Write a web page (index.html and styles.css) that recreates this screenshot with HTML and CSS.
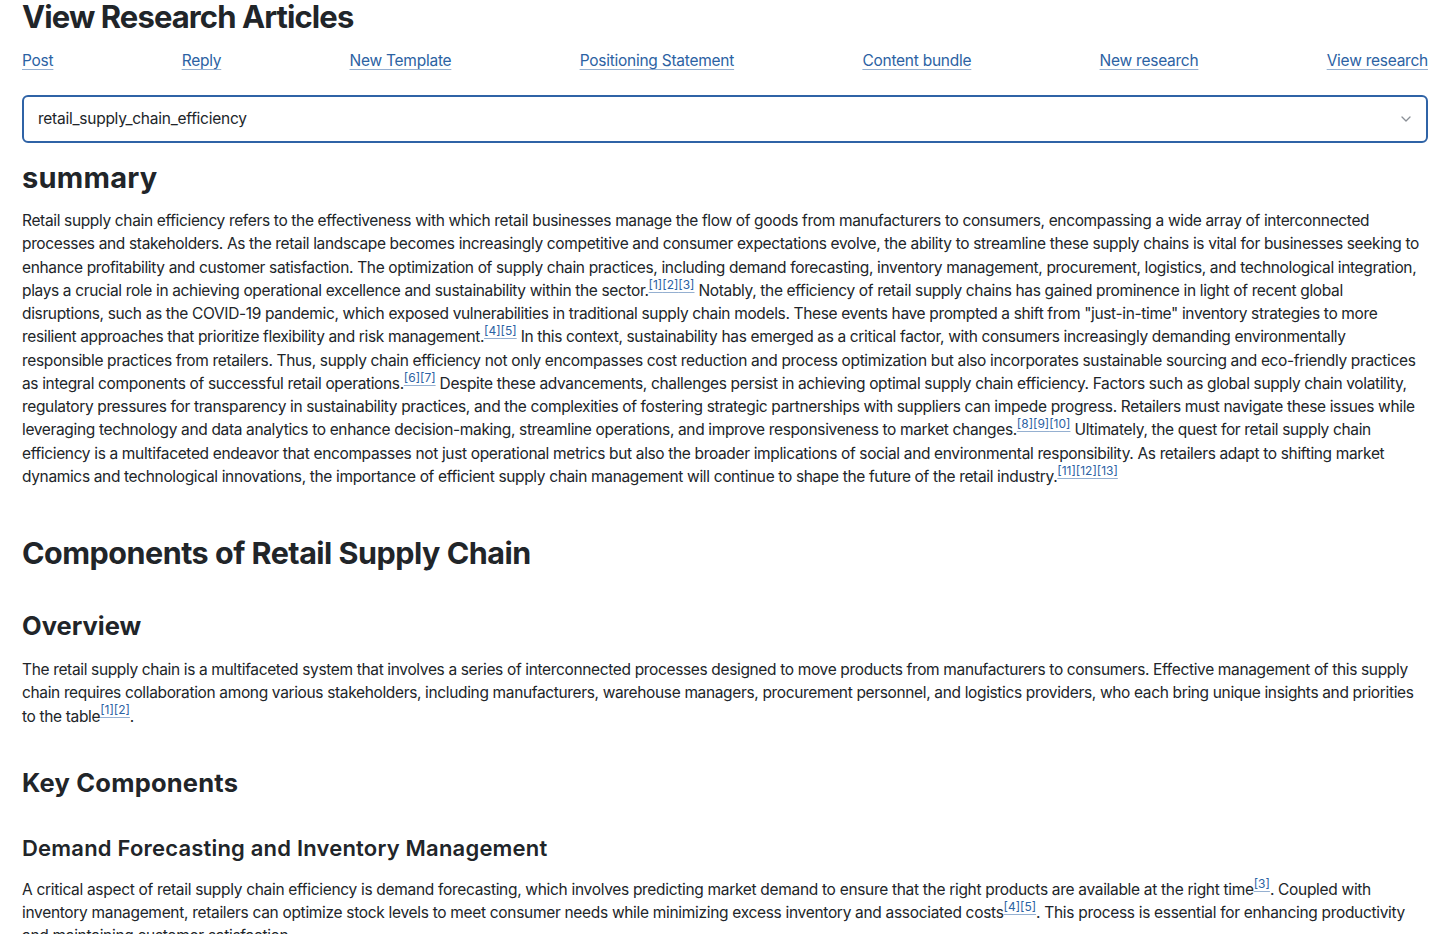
FILE: index.html
```html
<!DOCTYPE html>
<html lang="en">
<head>
<meta charset="utf-8">
<title>View Research Articles</title>
<link rel="stylesheet" href="styles.css">
</head>
<body>
<main class="page">
  <h1 class="page-title">View Research Articles</h1>
  <nav class="nav-links">
    <a href="#">Post</a>
    <a href="#">Reply</a>
    <a href="#">New Template</a>
    <a href="#">Positioning Statement</a>
    <a href="#">Content bundle</a>
    <a href="#">New research</a>
    <a href="#">View research</a>
  </nav>
  <div class="select-box">
    <span class="select-value">retail_supply_chain_efficiency</span>
    <svg class="chevron" width="12" height="8" viewBox="0 0 12 8"><path d="M2 2l4 4 4-4" fill="none" stroke="#8a8f96" stroke-width="1.3" stroke-linecap="round" stroke-linejoin="round"/></svg>
  </div>

  <article class="article">
    <h2 class="summary-title">summary</h2>
    <p>Retail supply chain efficiency refers to the effectiveness with which retail businesses manage the flow of goods from manufacturers to consumers, encompassing a wide array of interconnected processes and stakeholders. As the retail landscape becomes increasingly competitive and consumer expectations evolve, the ability to streamline these supply chains is vital for businesses seeking to enhance profitability and customer satisfaction. The optimization of supply chain practices, including demand forecasting, inventory management, procurement, logistics, and technological integration, plays a crucial role in achieving operational excellence and sustainability within the sector.<sup><a href="#">[1]</a><a href="#">[2]</a><a href="#">[3]</a></sup> Notably, the efficiency of retail supply chains has gained prominence in light of recent global disruptions, such as the COVID-19 pandemic, which exposed vulnerabilities in traditional supply chain models. These events have prompted a shift from "just-in-time" inventory strategies to more resilient approaches that prioritize flexibility and risk management.<sup><a href="#">[4]</a><a href="#">[5]</a></sup> In this context, sustainability has emerged as a critical factor, with consumers increasingly demanding environmentally responsible practices from retailers. Thus, supply chain efficiency not only encompasses cost reduction and process optimization but also incorporates sustainable sourcing and eco-friendly practices as integral components of successful retail operations.<sup><a href="#">[6]</a><a href="#">[7]</a></sup> Despite these advancements, challenges persist in achieving optimal supply chain efficiency. Factors such as global supply chain volatility, regulatory pressures for transparency in sustainability practices, and the complexities of fostering strategic partnerships with suppliers can impede progress. Retailers must navigate these issues while leveraging technology and data analytics to enhance decision-making, streamline operations, and improve responsiveness to market changes.<sup><a href="#">[8]</a><a href="#">[9]</a><a href="#">[10]</a></sup> Ultimately, the quest for retail supply chain efficiency is a multifaceted endeavor that encompasses not just operational metrics but also the broader implications of social and environmental responsibility. As retailers adapt to shifting market dynamics and technological innovations, the importance of efficient supply chain management will continue to shape the future of the retail industry.<sup><a href="#">[11]</a><a href="#">[12]</a><a href="#">[13]</a></sup></p>

    <h2 class="section-title">Components of Retail Supply Chain</h2>
    <h3 class="sub-title overview-title">Overview</h3>
    <p>The retail supply chain is a multifaceted system that involves a series of interconnected processes designed to move products from manufacturers to consumers. Effective management of this supply chain requires collaboration among various stakeholders, including manufacturers, warehouse managers, procurement personnel, and logistics providers, who each bring unique insights and priorities to the table<sup><a href="#">[1]</a><a href="#">[2]</a></sup>.</p>

    <h3 class="sub-title key-title">Key Components</h3>
    <h4 class="minor-title">Demand Forecasting and Inventory Management</h4>
    <p class="wide-para">A critical aspect of retail supply chain efficiency is demand forecasting, which involves predicting market demand to ensure that the right products are available at the right time<sup><a href="#">[3]</a></sup>. Coupled with inventory management, retailers can optimize stock levels to meet consumer needs while minimizing excess inventory and associated costs<sup><a href="#">[4]</a><a href="#">[5]</a></sup>. This process is essential for enhancing productivity and maintaining customer satisfaction.</p>
  </article>
</main>
</body>
</html>
```

FILE: styles.css
```css
html, body {
  margin: 0;
  padding: 0;
  background: #ffffff;
}

body {
  font-family: Inter, "Noto Sans", "Liberation Sans", sans-serif;
  color: #212529;
  font-size: 15.5px;
  line-height: 23.25px;
}

.page {
  padding: 0 28px 0 22px;
}

.page-title {
  margin: -2px 0 0;
  font-size: 31px;
  line-height: 38px;
  font-weight: 700;
  letter-spacing: -0.9px;
}

.nav-links {
  display: flex;
  justify-content: space-between;
  margin-top: 13px;
  letter-spacing: -0.25px;
}

.nav-links a,
.article a {
  color: #2c62a3;
  text-decoration: underline;
  text-decoration-color: rgba(44, 98, 163, 0.5);
  text-underline-offset: 3px;
}

.nav-links a {
  font-size: 15.5px;
  line-height: 24px;
}

.select-box {
  display: flex;
  align-items: center;
  justify-content: space-between;
  height: 48px;
  box-sizing: border-box;
  margin-top: 22px;
  padding: 0 14px 0 14px;
  border: 2px solid #2f63a6;
  border-radius: 6px;
}

.select-value {
  font-size: 15.5px;
  letter-spacing: -0.25px;
  color: #212529;
}

.article p {
  margin: 0;
  letter-spacing: -0.35px;
}

.article p.wide-para {
  letter-spacing: -0.31px;
}

.summary-title {
  margin: 17px 0 13px;
  font-size: 29px;
  line-height: 36px;
  font-weight: 700;
  letter-spacing: 0.25px;
}

.section-title {
  margin: 46px 0 0;
  font-size: 30.5px;
  line-height: 38px;
  font-weight: 700;
  letter-spacing: -0.5px;
}

.sub-title {
  font-size: 25.5px;
  line-height: 32px;
  font-weight: 700;
}

.overview-title {
  margin: 38px 0 16px;
}

.key-title {
  margin: 39px 0 18px;
  letter-spacing: 0.2px;
}

.minor-title {
  margin: 35px 0 16px;
  font-size: 22px;
  line-height: 28px;
  font-weight: 600;
  letter-spacing: 0.2px;
}

sup {
  font-size: 12px;
  line-height: 0;
  vertical-align: baseline;
  position: relative;
  top: -0.6em;
  letter-spacing: 0;
}
```
